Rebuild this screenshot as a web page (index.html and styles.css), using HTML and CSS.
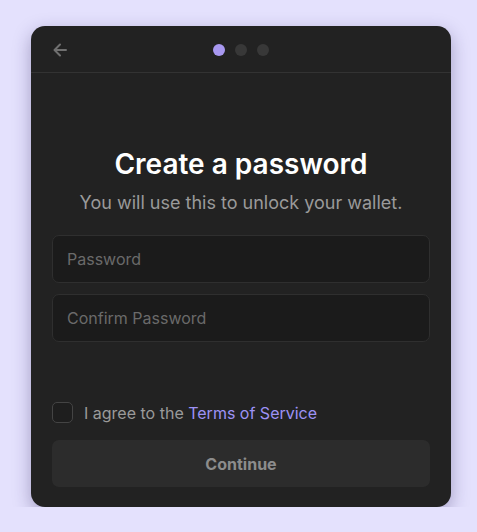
FILE: index.html
```html
<!DOCTYPE html>
<html>
<head>
<meta charset="utf-8">
<link rel="stylesheet" href="styles.css">
</head>
<body>
<div class="card">
  <div class="header">
    <button class="back" aria-label="Back">
      <svg width="16" height="16" viewBox="0 0 16 16" fill="none" stroke="currentColor" stroke-width="2" stroke-linecap="round" stroke-linejoin="round"><path d="M14 8H2.5M8 2.5 2.5 8 8 13.5"/></svg>
    </button>
    <div class="dots"><span class="dot active"></span><span class="dot"></span><span class="dot"></span></div>
  </div>
  <div class="content">
    <h1 class="title">Create a password</h1>
    <p class="subtitle">You will use this to unlock your wallet.</p>
    <div class="fields">
      <input class="field" type="password" placeholder="Password">
      <input class="field" type="password" placeholder="Confirm Password">
    </div>
    <label class="agree"><span class="box"></span><span>I agree to the <a class="link">Terms of Service</a></span></label>
    <button class="continue">Continue</button>
  </div>
</div>
</body>
</html>
```
FILE: styles.css
```css
* { box-sizing: border-box; }
body {
  margin: 0;
  background: #e4e1fd;
  font-family: Inter, "Noto Sans", sans-serif;
}
.card {
  margin: 26px 0 0 31px;
  width: 420px;
  height: 481px;
  background: #222222;
  border-radius: 14px;
  box-shadow: 0 6px 18px rgba(40, 30, 90, 0.35);
  display: flex;
  flex-direction: column;
  overflow: hidden;
}
.header {
  height: 47px;
  border-bottom: 1px solid #333333;
  display: flex;
  align-items: center;
  justify-content: center;
  position: relative;
  padding-top: 2px;
}
.back {
  position: absolute;
  left: 21px;
  top: 16px;
  background: none;
  border: 0;
  padding: 0;
  color: #707070;
  width: 16px;
  height: 16px;
  display: flex;
}
.dots { display: flex; gap: 10px; }
.dot { width: 12px; height: 12px; border-radius: 50%; background: #383838; }
.dot.active { background: #a898f0; }
.content {
  padding: 74px 21px 20px;
  display: flex;
  flex-direction: column;
  flex: 1;
}
.title {
  margin: 0;
  text-align: center;
  color: #ffffff;
  font-size: 28px;
  font-weight: 600;
  line-height: 34px;
}
.subtitle {
  margin: 10px 0 0;
  text-align: center;
  color: #9a9a9a;
  font-size: 18px;
  line-height: 24px;
}
.fields {
  margin-top: 20px;
  display: flex;
  flex-direction: column;
  gap: 11px;
}
.field {
  height: 48px;
  background: #1b1b1b;
  border: 1px solid #2f2f2f;
  border-radius: 7px;
  padding: 0 14px;
  font-family: inherit;
  font-size: 16px;
  color: #ddd;
  outline: none;
}
.field::placeholder { color: #6a6a6a; }
.agree {
  margin-top: auto;
  display: flex;
  align-items: center;
  gap: 11px;
  color: #9a9a9a;
  font-size: 16px;
}
.box {
  width: 21px;
  height: 21px;
  border: 1px solid #444;
  border-radius: 5px;
  background: #1e1e1e;
}
.link { color: #9d92f5; }
.continue {
  margin-top: 17px;
  height: 47px;
  border: 0;
  border-radius: 7px;
  background: #2c2c2c;
  color: #8c8c8c;
  font-family: inherit;
  font-size: 16px;
  font-weight: 700;
}
```
